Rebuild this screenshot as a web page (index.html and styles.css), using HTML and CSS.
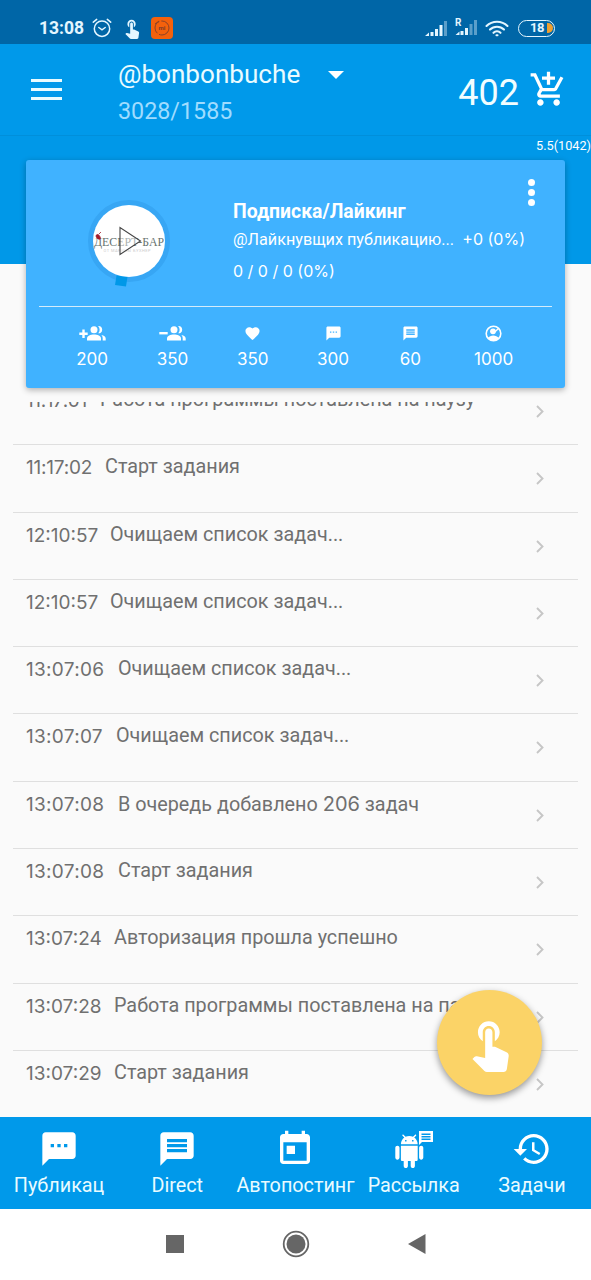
FILE: index.html
```html
<!DOCTYPE html>
<html lang="ru">

<head>
  <meta charset="UTF-8">
  <meta name="viewport" content="width=device-width, initial-scale=1.0">
  <title>@bonbonbuche</title>
  <link rel="stylesheet" href="styles.css">
</head>

<body>
  <!-- icons used more than once -->
  <svg class="sprite">
    <symbol id="touch" viewBox="0 0 24 24">
      <path d="M9 11.24V7.5C9 6.12 10.12 5 11.5 5S14 6.12 14 7.5v3.74c1.21-.81 2-2.18 2-3.74C16 5.01 13.99 3 11.5 3S7 5.01 7 7.5c0 1.56.79 2.93 2 3.74zm9.84 4.63l-4.54-2.26c-.17-.07-.35-.11-.54-.11H13v-6c0-.83-.67-1.5-1.5-1.5S10 6.67 10 7.5v10.74l-3.43-.72c-.08-.01-.15-.03-.24-.03-.31 0-.59.13-.79.33l-.79.8 4.94 4.94c.27.27.65.44 1.06.44h6.79c.75 0 1.33-.55 1.44-1.28l.75-5.27c.01-.07.02-.14.02-.2 0-.62-.38-1.16-.91-1.38z"/>
    </symbol>
    <symbol id="textsms" viewBox="0 0 24 24">
      <path d="M20 2H4c-1.1 0-1.99.9-1.99 2L2 22l4-4h14c1.1 0 2-.9 2-2V4c0-1.1-.9-2-2-2zM9 11H7V9h2v2zm4 0h-2V9h2v2zm4 0h-2V9h2v2z"/>
    </symbol>
    <symbol id="message" viewBox="0 0 24 24">
      <path d="M20 2H4c-1.1 0-1.99.9-1.99 2L2 22l4-4h14c1.1 0 2-.9 2-2V4c0-1.1-.9-2-2-2zm-2 12H6v-2h12v2zm0-3H6V9h12v2zm0-3H6V6h12v2z"/>
    </symbol>
    <symbol id="people" viewBox="0 0 19 15">
      <circle cx="7" cy="3.7" r="3.5"/>
      <path d="M0 14.500v-2c0-2.600 3.500-4 7-4s7 1.400 7 4v2z"/>
      <path d="M11.200 7.200a5 5 0 0 0 0-7c1-.4 4 .2 4 3.500s-3 4-4 3.500z"/>
      <path d="M14.300 9c2.800.4 4.400 1.600 4.400 3.500v2h-3v-2c0-1.600-.4-2.700-1.400-3.500z"/>
    </symbol>
    <symbol id="chevron" viewBox="0 0 8 13">
      <path d="M1 1l5.500 5.500L1 12" fill="none" stroke="#c6c6c6" stroke-width="1.900"/>
    </symbol>
  </svg>

  <div class="status-bar">
    <span class="clock">13:08</span>
    <svg class="line-icon" width="20" height="20" viewBox="0 0 20 20">
      <circle cx="10" cy="10.700" r="7.700"/>
      <path d="M1.300 4.200l3.400-2.800M18.700 4.200l-3.400-2.800M6.800 9.500l3.200 2.300 3.200-2.300"/>
    </svg>
    <svg class="status-touch" width="22" height="22"><use href="#touch"/></svg>
    <svg width="22" height="22" viewBox="0 0 22 22">
      <rect width="22" height="22" rx="4" fill="#f4610c"/>
      <circle cx="11" cy="11" r="7" fill="none" stroke="#8c4228" stroke-width="1" stroke-dasharray="14 2"/>
      <text x="11" y="13" font-family="Roboto, sans-serif" font-size="6" font-weight="700" fill="#7c3a28" text-anchor="middle">mi</text>
      <path d="M4 7l4-3" stroke="#8c4228"/>
    </svg>
    <div class="status-right">
      <svg width="23" height="17" viewBox="0 0 23 17">
        <path d="M0 16l4-3.500V16zM5.500 12h3v4h-3zM10 9h3v7h-3zM14.500 5h3v11h-3z"/>
        <path d="M19 1h3v15h-3z" opacity=".4"/>
      </svg>
      <svg class="sim2" width="23" height="18" viewBox="0 0 23 18">
        <text x="0" y="7.800" font-family="Roboto, sans-serif" font-size="10" font-weight="700">R</text>
        <path d="M.5 17l4-3.500V17zM5.500 13h3v4h-3zM10 10h3v7h-3z"/>
        <path d="M14.500 6h3v11h-3zM19 2h3v15h-3z" opacity=".4"/>
      </svg>
      <svg class="line-icon wifi" width="24" height="17" viewBox="0 0 24 17">
        <path d="M1.500 6a15 15 0 0 1 21 0M5 9.600a10 10 0 0 1 14 0M8.500 12.800a5 5 0 0 1 7 0"/>
        <path d="M11.500 15.300h1"/>
      </svg>
      <div class="battery">18<i></i></div>
    </div>
  </div>

  <header class="app-bar">
    <div class="burger"><i></i><i></i><i></i></div>
    <div class="account">
      <div class="login">@bonbonbuche <i class="arrow"></i></div>
      <div class="counts">3028/1585</div>
    </div>
    <div class="coins">402</div>
    <svg width="39" height="39" viewBox="0 0 24 24">
      <path d="M11 9h2V6h3V4h-3V1h-2v3H8v2h3v3zm-4 9c-1.100 0-1.990.9-1.990 2S5.900 22 7 22s2-.9 2-2-.9-2-2-2zm10 0c-1.100 0-1.990.9-1.990 2s.89 2 1.990 2 2-.9 2-2-.9-2-2-2zm-9.830-3.250l.03-.12.9-1.630h7.450c.75 0 1.410-.41 1.750-1.030l3.860-7.010L19.420 4h-.01l-1.100 2-2.760 5H8.530l-.13-.27L6.160 6l-.95-2-.94-2H1v2h2l3.600 7.590-1.350 2.450c-.16.28-.25.61-.25.96 0 1.100.9 2 2 2h12v-2H7.420c-.13 0-.25-.11-.25-.25z"/>
    </svg>
  </header>

  <div class="panel">
    <div class="version">5.5(1042)</div>
    <div class="card">
      <div class="card-top">
        <svg class="avatar" width="88" height="92" viewBox="0 0 88 92">
          <circle cx="44" cy="44" r="38.500" fill="none" stroke="#37a6f4" stroke-width="5"/>
          <path d="M31.500 78.500l11 1.500-1.500 9.500-11-1.500z" fill="#0098e8"/>
          <circle cx="44" cy="44" r="36" fill="#fff"/>
          <text x="44" y="48.500" font-family="Liberation Serif, serif" font-size="13" fill="#67736f" text-anchor="middle" textLength="70" lengthAdjust="spacingAndGlyphs">ДЕСЕРТ-БАР</text>
          <text x="42" y="54.500" font-family="Roboto, sans-serif" font-size="4" fill="#ccc" text-anchor="middle" textLength="47">ОТ МАРИНЫ БУХНЕР</text>
          <path d="M11 39c0-1.500 2-2 3-.8s2 3 1 3.800-4-1-4-3zM14 37l2-2" fill="#a31c2c" stroke="#a31c2c" stroke-width=".8"/>
          <path d="M35 30.500v27L55.500 44z" fill="#fff" fill-opacity=".45" stroke="#444" stroke-width="1.100"/>
        </svg>
        <div class="task">
          <div class="task-name">Подписка/Лайкинг</div>
          <div class="task-row">
            <span class="task-source">@Лайкнувщих публикацию...</span>
            <span class="num">+0 (0%)</span>
          </div>
          <div class="num task-progress">0 / 0 / 0 (0%)</div>
        </div>
        <div class="dots"><i></i><i></i><i></i></div>
      </div>
      <div class="stats">
        <div class="stat">
          <svg width="27" height="15" viewBox="0 0 27 15">
            <path d="M3.300 3.500h2.400v3h3v2.400h-3v3H3.300v-3h-3V6.500h3z"/>
            <use href="#people" x="8" width="19" height="15"/>
          </svg>
          <span>200</span>
        </div>
        <div class="stat">
          <svg width="27" height="15" viewBox="0 0 27 15">
            <path d="M.3 6h8.400v2.400H.3z"/>
            <use href="#people" x="8" width="19" height="15"/>
          </svg>
          <span>350</span>
        </div>
        <div class="stat">
          <svg width="17" height="17" viewBox="0 0 24 24">
            <path d="M12 21.350l-1.450-1.320C5.400 15.360 2 12.280 2 8.500 2 5.420 4.420 3 7.500 3c1.740 0 3.410.81 4.500 2.090C13.090 3.810 14.760 3 16.500 3 19.580 3 22 5.420 22 8.500c0 3.780-3.400 6.860-8.550 11.540L12 21.350z"/>
          </svg>
          <span>350</span>
        </div>
        <div class="stat">
          <svg width="17" height="17"><use href="#textsms"/></svg>
          <span>300</span>
        </div>
        <div class="stat stat-60">
          <svg width="17" height="17"><use href="#message"/></svg>
          <span>60</span>
        </div>
        <div class="stat">
          <svg width="17" height="17" viewBox="0 0 17 17">
            <circle cx="8.500" cy="8.500" r="7.300" fill="none" stroke="#fff" stroke-width="1.600"/>
            <circle cx="8" cy="6.300" r="2.900"/>
            <path d="M2.800 13c1.200-1.600 3.500-2.500 5.500-2.500s4.300.9 5.500 2.500c-3 3.500-8 3.500-11 0z"/>
            <path d="M8 8.500l5.500-5" stroke="#fff" stroke-width="1.500"/>
          </svg>
          <span>1000</span>
        </div>
      </div>
    </div>
  </div>

  <div class="log">
    <ul>
      <li><span class="time t0">11:17:01</span><span class="msg">Работа программы поставлена на паузу</span><svg><use href="#chevron"/></svg></li>
      <li><span class="time t1">11:17:02</span><span class="msg">Старт задания</span><svg><use href="#chevron"/></svg></li>
      <li><span class="time t2">12:10:57</span><span class="msg">Очищаем список задач...</span><svg><use href="#chevron"/></svg></li>
      <li><span class="time t2">12:10:57</span><span class="msg">Очищаем список задач...</span><svg><use href="#chevron"/></svg></li>
      <li><span class="time t5">13:07:06</span><span class="msg">Очищаем список задач...</span><svg><use href="#chevron"/></svg></li>
      <li><span class="time t4">13:07:07</span><span class="msg">Очищаем список задач...</span><svg><use href="#chevron"/></svg></li>
      <li><span class="time t5">13:07:08</span><span class="msg">В очередь добавлено <b>206</b> задач</span><svg><use href="#chevron"/></svg></li>
      <li><span class="time t5">13:07:08</span><span class="msg">Старт задания</span><svg><use href="#chevron"/></svg></li>
      <li><span class="time t3">13:07:24</span><span class="msg">Авторизация прошла успешно</span><svg><use href="#chevron"/></svg></li>
      <li><span class="time t3">13:07:28</span><span class="msg">Работа программы поставлена на паузу</span><svg><use href="#chevron"/></svg></li>
      <li><span class="time t3">13:07:29</span><span class="msg">Старт задания</span><svg><use href="#chevron"/></svg></li>
    </ul>
  </div>

  <div class="fab"><svg width="58" height="58"><use href="#touch"/></svg></div>

  <nav class="tabs">
    <div class="tab"><svg width="40" height="40"><use href="#textsms"/></svg><span>Публикац</span></div>
    <div class="tab"><svg width="40" height="40"><use href="#message"/></svg><span>Direct</span></div>
    <div class="tab">
      <svg width="40" height="40" viewBox="0 0 24 24">
        <path d="M19 3h-1V1h-2v2H8V1H6v2H5c-1.110 0-1.990.9-1.990 2L3 19c0 1.100.89 2 2 2h14c1.100 0 2-.9 2-2V5c0-1.100-.9-2-2-2zm0 16H5V8h14v11zM7 10h5v5H7z"/>
      </svg>
      <span>Автопостинг</span>
    </div>
    <div class="tab">
      <svg width="40" height="40" viewBox="0 0 40 40">
        <g transform="translate(-1.500 5.500) scale(1.400)">
          <path d="M6 18c0 .55.45 1 1 1h1v3.500c0 .83.67 1.500 1.500 1.500s1.500-.67 1.500-1.500V19h2v3.500c0 .83.67 1.500 1.500 1.500s1.500-.67 1.500-1.500V19h1c.55 0 1-.45 1-1V8H6v10zM3.500 8C2.670 8 2 8.670 2 9.500v7c0 .83.67 1.500 1.500 1.500S5 17.330 5 16.500v-7C5 8.670 4.330 8 3.500 8zm17 0c-.83 0-1.500.67-1.500 1.500v7c0 .83.67 1.500 1.500 1.500s1.500-.67 1.500-1.500v-7c0-.83-.67-1.500-1.500-1.500zm-4.970-5.840l1.300-1.300c.2-.2.2-.51 0-.71-.2-.2-.51-.2-.71 0l-1.480 1.480C13.850 1.230 12.950 1 12 1c-.96 0-1.860.23-2.660.63L7.850.15c-.2-.2-.51-.2-.71 0-.2.2-.2.51 0 .71l1.310 1.310C6.970 3.260 6 5.010 6 7h12c0-1.990-.97-3.750-2.470-4.840zM10 5H9V4h1v1zm5 0h-1V4h1v1z"/>
        </g>
        <path d="M25 2h14v11H28l-3 3zm2.500 2.500V6h9V4.500zm0 2.500v1.500h9V7zm0 2.500V11h9V9.500z" fill-rule="evenodd"/>
      </svg>
      <span>Рассылка</span>
    </div>
    <div class="tab">
      <svg width="40" height="40" viewBox="0 0 24 24">
        <path d="M13 3c-4.970 0-9 4.030-9 9H1l3.890 3.890.07.14L9 12H6c0-3.870 3.130-7 7-7s7 3.130 7 7-3.130 7-7 7c-1.930 0-3.680-.79-4.940-2.060l-1.420 1.420C8.270 19.990 10.510 21 13 21c4.970 0 9-4.030 9-9s-4.030-9-9-9zm-1 5v5l4.280 2.540.72-1.210-3.500-2.080V8H12z"/>
      </svg>
      <span>Задачи</span>
    </div>
  </nav>

  <div class="system-nav">
    <svg width="28" height="28" viewBox="0 0 28 28"><path d="M5 5h18v18H5z"/></svg>
    <svg width="28" height="28" viewBox="0 0 28 28"><circle cx="14" cy="14" r="12.300" fill="none" stroke="#666" stroke-width="1.800"/><circle cx="14" cy="14" r="9.500"/></svg>
    <svg width="28" height="28" viewBox="0 0 28 28"><path d="M22.500 4v20L5 14z"/></svg>
  </div>
</body>

</html>
```
FILE: styles.css
```css
* {
  box-sizing: border-box;
}

body {
  margin: 0;
  width: 591px;
  height: 1280px;
  overflow: hidden;
  font-family: Roboto, sans-serif;
  color: white;
  background-color: #fafafa;
}

svg {
  display: block;
  fill: white;
  flex-shrink: 0;
}

.sprite {
  display: none;
}

/* status bar */
.status-bar {
  display: flex;
  align-items: center;
  height: 44px;
  padding: 12px 36px 0 39px;
  background-color: #0066a7;
}

.status-bar svg {
  fill: #e4f6ff;
}

.status-bar .line-icon {
  fill: none;
  stroke: #e4f6ff;
  stroke-width: 1.5;
  stroke-linecap: round;
}

.status-bar .wifi {
  margin-right: 2px;
  stroke-width: 2.1;
}

.clock {
  width: 53px;
  font-size: 17.5px;
  font-weight: 700;
  color: #e4f6ff;
}

.status-touch {
  margin: 0 8px 0 9px;
}

.status-right {
  display: flex;
  align-items: center;
  gap: 7px;
  margin-left: auto;
}

.sim2 {
  margin-top: -2px;
}

.battery {
  display: flex;
  align-items: center;
  justify-content: flex-end;
  gap: 3px;
  width: 37px;
  height: 17px;
  padding-right: 1px;
  border: 1.5px solid #e4f6ff;
  border-radius: 9px;
  font-size: 13px;
  font-weight: 700;
  line-height: 14px;
  letter-spacing: -0.5px;
  color: #e4f6ff;
}

.battery i {
  width: 6px;
  height: 10px;
  border-radius: 0 5px 5px 0;
  background-color: #f0a030;
}

/* app bar */
.app-bar {
  display: flex;
  height: 92px;
  padding: 14px 23px 0 31px;
  background-color: #0099ea;
  border-bottom: 1px solid #008fdb;
}

.app-bar > svg {
  margin: 12px 0 0 10px;
}

.burger {
  display: flex;
  flex-direction: column;
  gap: 6px;
  width: 31px;
  margin: 21px 56px 0 0;
}

.burger i {
  height: 3px;
  background-color: #e9fbff;
}

.account {
  flex: 1;
}

.login {
  display: flex;
  align-items: center;
  height: 32px;
  font-size: 26.1px;
  color: #e9fbff;
}

.arrow {
  margin: 2px 0 0 28px;
  border: 8px solid transparent;
  border-top-color: white;
  border-bottom: none;
}

.counts {
  margin-top: 5px;
  font-size: 23.3px;
  line-height: 32px;
  color: #9fdcff;
}

.coins {
  margin-top: 13px;
  font-size: 36px;
  line-height: 44px;
  color: #f2fdff;
}

/* the card hangs below the blue panel */
.panel {
  height: 128px;
  background-color: #0098e8;
}

.version {
  height: 24px;
  padding-top: 2px;
  font-size: 12.7px;
  line-height: 16px;
  text-align: right;
}

.card {
  width: 539px;
  height: 228px;
  margin-left: 26px;
  border-radius: 3px;
  background-color: #40b2ff;
  box-shadow: 0 2px 6px rgba(0, 0, 0, 0.3);
}

.card-top {
  display: flex;
  height: 147px;
  margin: 0 13px;
  border-bottom: 1.5px solid #d5ecfb;
}

.avatar {
  margin: 37px 0 0 46px;
}

.task {
  width: 292px;
  margin: 39px 0 0 60px;
}

.task-name {
  font-size: 19.4px;
  font-weight: 700;
  line-height: 26px;
}

.task-row {
  display: flex;
  justify-content: space-between;
  font-size: 16.2px;
  line-height: 30px;
}

.num {
  font-family: Inter, sans-serif;
  font-size: 16px;
}

.task-row .num {
  margin-top: -1px;
}

.task-progress {
  line-height: 32px;
}

.dots {
  display: flex;
  flex-direction: column;
  gap: 3px;
  margin: 19px 0 0 3px;
}

.dots i {
  width: 7px;
  height: 7px;
  border-radius: 50%;
  background-color: white;
}

.stats {
  display: grid;
  grid-template-columns: repeat(6, 80.3px);
  margin-left: 26px;
}

.stat {
  display: flex;
  flex-direction: column;
  align-items: center;
  font-family: Inter, sans-serif;
  font-size: 17px;
}

.stat svg {
  height: 17px;
  margin: 18px 0 7px;
}

.stat span {
  line-height: 21px;
}

.stat-60 {
  margin-left: -6px;
}

/* log */
.log {
  height: 715px;
  margin-top: 138px;
  overflow: hidden;
}

.log ul {
  margin: -24px 13px 0;
  padding: 0;
  list-style: none;
}

.log li {
  display: flex;
  height: 67.3px;
  padding: 8px 34px 0 13px;
  border-bottom: 1.5px solid #dfdfdf;
  font-size: 19.8px;
  line-height: 28px;
  color: #707070;
}

.log li:last-child {
  border-bottom: none;
}

.log svg {
  width: 8px;
  height: 13px;
  margin: 19px 0 0 auto;
}

.time,
.msg b {
  font-family: Inter, sans-serif;
  font-size: 19px;
  font-weight: 400;
}

.msg b {
  font-size: 20px;
}

.time {
  padding-top: 1px;
}

.t0 {
  width: 74px;
  letter-spacing: -0.4px;
}

.t1 {
  width: 79px;
  letter-spacing: -0.2px;
}

.t2 {
  width: 84px;
}

.t3 {
  width: 88px;
}

.t4 {
  width: 90px;
  letter-spacing: 0.3px;
}

.t5 {
  width: 92px;
  letter-spacing: 0.3px;
}

.fab {
  position: absolute;
  top: 990px;
  left: 437px;
  display: flex;
  align-items: center;
  justify-content: center;
  width: 105px;
  height: 105px;
  border-radius: 50%;
  background-color: #fbd367;
  box-shadow: 0 3px 7px rgba(0, 0, 0, 0.4);
}

/* bottom tabs */
.tabs {
  display: grid;
  grid-template-columns: repeat(5, 1fr);
  height: 92px;
  background-color: #0099ea;
}

.tab {
  display: flex;
  flex-direction: column;
  align-items: center;
  padding-top: 12px;
  font-size: 19.8px;
  line-height: 34px;
  color: #e9fbff;
}

.system-nav {
  display: flex;
  justify-content: center;
  gap: 93px;
  height: 71px;
  padding-top: 21px;
  background-color: white;
}

.system-nav svg {
  fill: #666;
}
```
